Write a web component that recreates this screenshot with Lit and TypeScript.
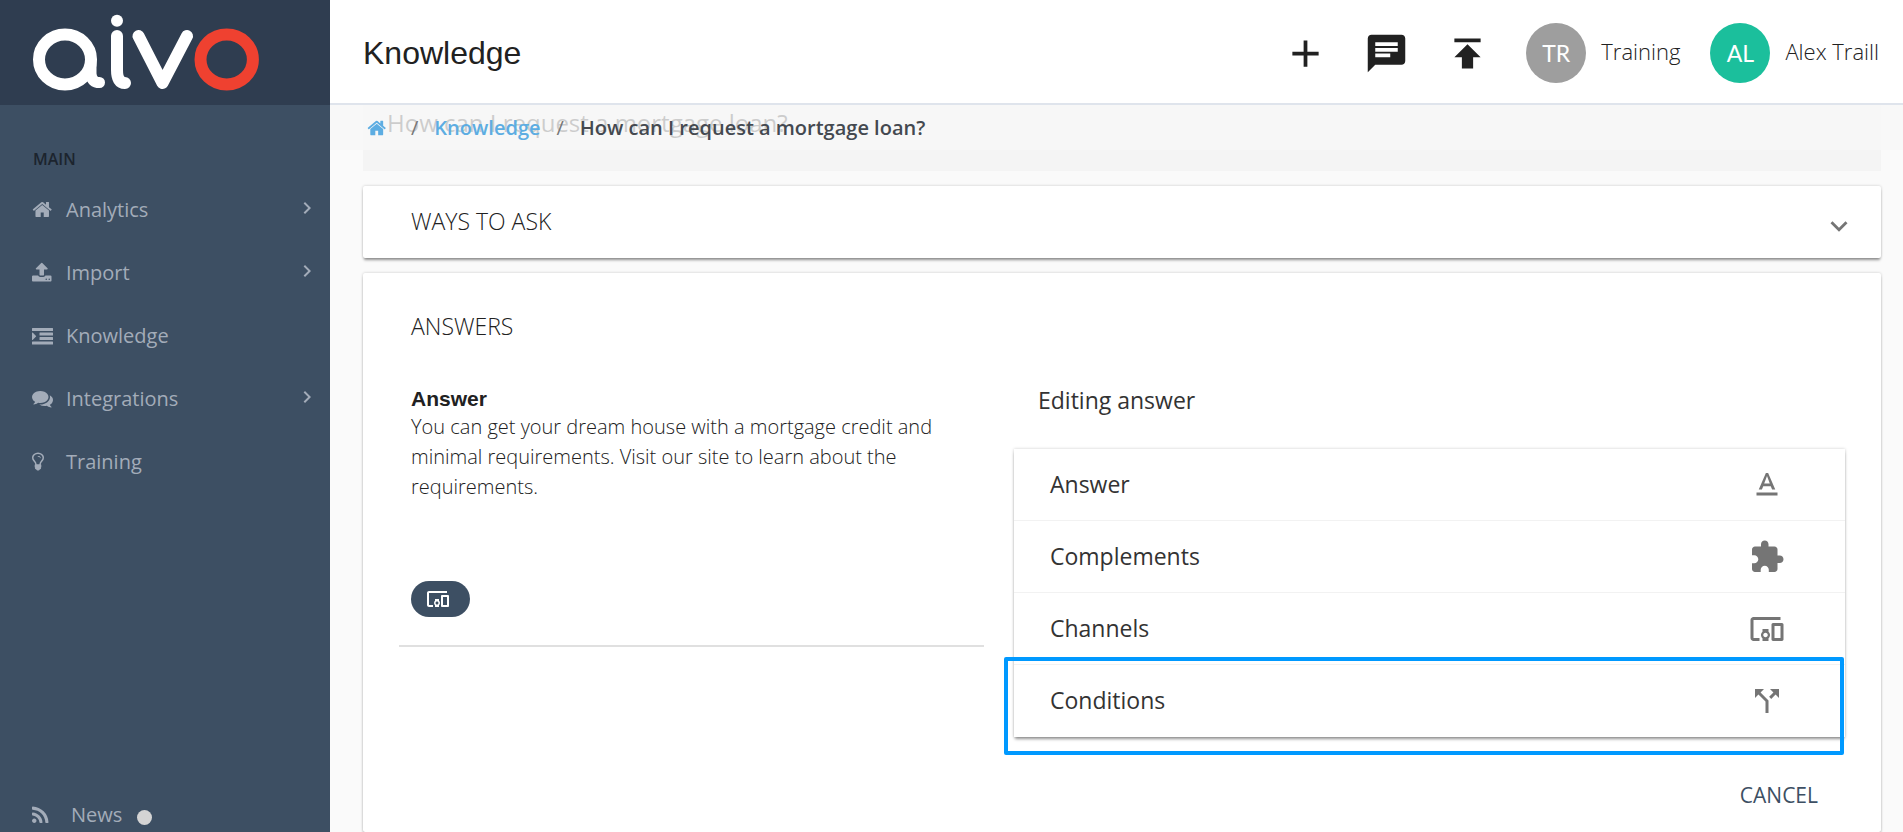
import { LitElement, html, css, svg } from "lit";
import { customElement, property } from "lit/decorators.js";

type Glyph = { box: string; d: string };

/* Sidebar glyphs are drawn on a 1792 unit grid, the rest on a 24 unit grid. */
const GLYPHS: Record<string, Glyph> = {
  home: {
    box: "24 0 1792 1792",
    d: "M1472 992v480q0 26-19 45t-45 19h-384v-384h-256v384h-384q-26 0-45-19t-19-45v-480q0-1 .5-3t.5-3l575-474 575 474q1 2 1 6zm223-69l-62 74q-8 9-21 11h-3q-13 0-21-7l-692-577-692 577q-12 8-24 7-13-2-21-11l-62-74q-8-10-7-23.5t11-21.5l719-599q32-26 76-26t76 26l244 204v-195q0-14 9-23t23-9h192q14 0 23 9t9 23v408l219 182q10 8 11 21.5t-7 23.5z",
  },
  upload: {
    box: "64 0 1792 1792",
    d: "M1344 1472q0-26-19-45t-45-19-45 19-19 45 19 45 45 19 45-19 19-45zm256 0q0-26-19-45t-45-19-45 19-19 45 19 45 45 19 45-19 19-45zm128-224v320q0 40-28 68t-68 28h-1472q-40 0-68-28t-28-68v-320q0-40 28-68t68-28h427q21 56 70.5 92t110.5 36h256q61 0 110.5-36t70.5-92h427q40 0 68 28t28 68zm-325-648q-17 40-59 40h-256v448q0 26-19 45t-45 19h-256q-26 0-45-19t-19-45v-448h-256q-42 0-59-40-17-39 14-69l448-448q18-19 45-19t45 19l448 448q31 30 14 69z",
  },
  indent: {
    box: "0 0 1792 1792",
    d: "M32 256h1728q32 0 32 32v192q0 32-32 32H32q-32 0-32-32V288q0-32 32-32zM672 640h1088q32 0 32 32v192q0 32-32 32H672q-32 0-32-32V672q0-32 32-32zM672 1024h1088q32 0 32 32v192q0 32-32 32H672q-32 0-32-32v-192q0-32 32-32zM32 1408h1728q32 0 32 32v192q0 32-32 32H32q-32 0-32-32v-192q0-32 32-32zM352 960q0 14-9 23l-288 288q-9 9-23 9-32 0-32-32V672q0-32 32-32 14 0 23 9l288 288q9 9 9 23z",
  },
  comments: {
    box: "0 0 1792 1792",
    d: "M1408 768q0 139-94 257t-256.5 186.5-353.5 68.5q-86 0-176-16-124 88-278 128-36 9-86 16h-3q-11 0-20.5-8t-11.5-21q-1-3-1-6.5t.5-6.5 2-6l2.5-5 3.5-5.5 4-5 4.5-5 4-4.5q5-6 23-25t26-29.5 22.5-29 25-38.5 20.5-44q-124-72-195-177t-71-224q0-139 94-257t256.5-186.5 353.5-68.5 353.5 68.5 256.5 186.5 94 257zm384 256q0 120-71 224.5t-195 176.5q10 24 20.5 44t25 38.5 22.5 29 26 29.5 23 25q1 1 4 4.5t4.5 5 4 5 3.5 5.5l2.5 5 2 6 .5 6.5-1 6.5q-3 14-13 22t-22 7q-50-7-86-16-154-40-278-128-90 16-176 16-271 0-472-132 58 4 88 4 161 0 309-45t264-129q125-92 192-212t67-254q0-77-23-152 129 71 204 178t75 230z",
  },
  bulb: {
    box: "384 0 1792 1792",
    d: "M1120 576q0 13-9.5 22.5t-22.5 9.5-22.5-9.5-9.5-22.5q0-46-54-71t-106-25q-13 0-22.5-9.5t-9.5-22.5 9.5-22.5 22.5-9.5q50 0 99.5 16t87 54 37.5 90zm160 0q0-72-34.5-134t-90-101.5-123-62-136.5-22.5-136.5 22.5-123 62-90 101.5-34.5 134q0 101 68 180 10 11 30.5 33t30.5 33q128 153 141 298h228q13-145 141-298 10-11 30.5-33t30.5-33q68-79 68-180zm128 0q0 155-103 268-45 49-74.5 87t-59.5 95.5-34 107.5q47 28 47 82 0 37-25 64 25 27 25 64 0 52-45 81 13 23 13 47 0 46-31.5 71t-77.5 25q-20 44-60 70t-87 26-87-26-60-70q-46 0-77.5-25t-31.5-71q0-24 13-47-45-29-45-81 0-37 25-64-25-27-25-64 0-54 47-82-4-50-34-107.5t-59.5-95.5-74.5-87q-103-113-103-268 0-99 44.5-184.5t117-142 164-89 186.5-32.5 186.5 32.5 164 89 117 142 44.5 184.5z",
  },
  rss: {
    box: "192 0 1792 1792",
    d: "M576 1344q0 80-56 136t-136 56-136-56-56-136 56-136 136-56 136 56 56 136zm512 123q2 28-17 48-18 21-47 21h-135q-25 0-43-16.5t-20-41.5q-22-229-184.5-391.5t-391.5-184.5q-25-2-41.5-20t-16.5-43v-135q0-29 21-47 17-17 43-17h5q160 13 306 80.5t259 181.5q114 113 181.5 259t80.5 306zm512 2q2 27-18 47-18 20-46 20h-143q-26 0-44.5-17.5t-19.5-42.5q-12-215-101-408.5t-231.5-336-336-231.5-408.5-102q-25-1-42.5-19.5t-17.5-43.5v-143q0-28 20-46 18-18 44-18h3q262 13 501.5 120t425.5 294q187 186 294 425.5t120 501.5z",
  },
  right: { box: "0 0 24 24", d: "M8.6 16.6 13.2 12 8.6 7.4 10 6l6 6-6 6z" },
  add: { box: "0 0 24 24", d: "M19 13h-6v6h-2v-6H5v-2h6V5h2v6h6v2z" },
  chat: {
    box: "0 0 24 24",
    d: "M20 2H4c-1.1 0-1.99.9-1.99 2L2 22l4-4h14c1.1 0 2-.9 2-2V4c0-1.1-.9-2-2-2zM6 9h12v2H6V9zm8 5H6v-2h8v2zm4-6H6V6h12v2z",
  },
  publish: { box: "0 0 24 24", d: "M5 4v2h14V4H5zm0 10h4v6h6v-6h4l-7-7-7 7z" },
  down: { box: "0 0 24 24", d: "M16.59 8.59L12 13.17 7.41 8.59 6 10l6 6 6-6z" },
  text: {
    box: "0 0 24 24",
    d: "M5 17v2h14v-2H5zm4.5-4.2h5l.9 2.2h2.1L12.75 4h-1.5L6.5 15h2.1l.9-2.2zM12 5.98L13.87 11h-3.74L12 5.98z",
  },
  puzzle: {
    box: "0 0 24 24",
    d: "M20.5 11H19V7c0-1.1-.9-2-2-2h-4V3.5C13 2.12 11.88 1 10.5 1S8 2.12 8 3.5V5H4c-1.1 0-1.99.9-1.99 2v3.8H3.5c1.49 0 2.7 1.21 2.7 2.7s-1.21 2.7-2.7 2.7H2V20c0 1.1.9 2 2 2h3.8v-1.5c0-1.49 1.21-2.7 2.7-2.7 1.49 0 2.7 1.21 2.7 2.7V22H17c1.1 0 2-.9 2-2v-4h1.5c1.38 0 2.5-1.12 2.5-2.5S21.88 11 20.5 11z",
  },
  devices: {
    box: "0 0 24 24",
    d: "M3 6h18V4H3c-1.1 0-2 .9-2 2v12c0 1.1.9 2 2 2h4v-2H3V6zm10 6H9v1.78c-.61.55-1 1.33-1 2.22s.39 1.67 1 2.22V20h4v-1.78c.61-.55 1-1.34 1-2.22s-.39-1.67-1-2.22V12zm-2 5.5c-.83 0-1.5-.67-1.5-1.5s.67-1.5 1.5-1.5 1.5.67 1.5 1.5-.67 1.5-1.5 1.5zM22 8h-6c-.5 0-1 .5-1 1v10c0 .5.5 1 1 1h6c.5 0 1-.5 1-1V9c0-.5-.5-1-1-1zm-1 10h-4v-8h4v8z",
  },
  split: {
    box: "0 0 24 24",
    d: "M14 4l2.29 2.29-2.88 2.88 1.42 1.42 2.88-2.88L20 10V4zm-4 0H4v6l2.29-2.29 4.71 4.7V20h2v-8.41l-5.29-5.3z",
  },
};

@customElement("ui-icon")
export class UiIcon extends LitElement {
  @property() name = "";

  static styles = css`
    :host {
      display: block;
      flex: none;
      width: 24px;
      height: 24px;
    }
    svg {
      display: block;
      width: 100%;
      height: 100%;
      fill: currentColor;
      overflow: visible;
    }
  `;

  render() {
    const g = GLYPHS[this.name];
    return g
      ? html`<svg viewBox=${g.box} aria-hidden="true">${svg`<path d=${g.d}></path>`}</svg>`
      : null;
  }
}

@customElement("app-sidebar")
export class AppSidebar extends LitElement {
  static styles = css`
    :host {
      display: flex;
      flex-direction: column;
      width: 330px;
      flex: none;
      box-sizing: border-box;
      background: #3d4f63;
      color: #a3acb9;
      font: 20px/30px "Open Sans", sans-serif;
    }
    a {
      color: inherit;
      text-decoration: none;
    }
    .brand {
      display: block;
      height: 105px;
      background: #2f3d50;
    }
    .brand svg {
      display: block;
      width: 330px;
      height: 105px;
    }
    h2 {
      margin: 0;
      padding: 42px 33px 0;
      font-size: 16px;
      line-height: 24px;
      font-weight: 600;
      color: #1c242e;
    }
    ul {
      list-style: none;
      margin: 0;
      padding: 7px 0 0;
    }
    .item {
      display: flex;
      align-items: center;
      height: 63px;
      padding: 0 11px 0 32px;
    }
    .item ui-icon {
      width: 21px;
      height: 21px;
    }
    .label {
      flex: 1;
      padding-left: 13px;
    }
    .item .more {
      width: 24px;
      height: 24px;
      padding-bottom: 4px;
    }
    .news {
      margin-top: auto;
      display: flex;
      align-items: center;
      padding: 0 32px 2px;
    }
    .news ui-icon {
      width: 21px;
      height: 21px;
      margin-right: 18px;
    }
    .dot {
      width: 15px;
      height: 15px;
      margin: 4px 0 0 15px;
      border-radius: 50%;
      background: #d4d4d4;
    }
  `;

  private items = [
    { icon: "home", label: "Analytics", more: true },
    { icon: "upload", label: "Import", more: true },
    { icon: "indent", label: "Knowledge", more: false },
    { icon: "comments", label: "Integrations", more: true },
    { icon: "bulb", label: "Training", more: false },
  ];

  render() {
    return html`
      <a class="brand" href="#" aria-label="aivo">
        <svg viewBox="0 0 330 105" fill="none" stroke-width="12" stroke-linecap="round" stroke-linejoin="round">
          <g stroke="#fff">
            <ellipse cx="65" cy="59.5" rx="26" ry="25"></ellipse>
            <path d="M91 60V74Q92 82.500 99.500 82.500" stroke-width="11"></path>
            <path d="M117 36V70Q117 83 125 83"></path>
            <path d="M138.500 36 162.500 83 187 36"></path>
          </g>
          <circle cx="117" cy="20.700" r="6" fill="#fff"></circle>
          <ellipse cx="226.700" cy="59.500" rx="26.200" ry="25" stroke="#ef4130"></ellipse>
        </svg>
      </a>
      <h2>MAIN</h2>
      <nav>
        <ul>
          ${this.items.map(
            (i) => html`<li>
              <a class="item" href="#">
                <ui-icon name=${i.icon}></ui-icon>
                <span class="label">${i.label}</span>
                ${i.more ? html`<ui-icon class="more" name="right"></ui-icon>` : null}
              </a>
            </li>`
          )}
        </ul>
      </nav>
      <a class="news" href="#">
        <ui-icon name="rss"></ui-icon>
        <span>News</span>
        <span class="dot"></span>
      </a>
    `;
  }
}

@customElement("app-header")
export class AppHeader extends LitElement {
  static styles = css`
    :host {
      display: flex;
      align-items: center;
      justify-content: space-between;
      box-sizing: border-box;
      height: 105px;
      padding: 3px 24px 0 33px;
      background: #fff;
      border-bottom: 2px solid #dfe4ec;
      color: #212121;
    }
    h1 {
      margin: 0;
      font: 400 32px/40px "Liberation Sans", Arial, sans-serif;
    }
    .actions,
    .account {
      display: flex;
      align-items: center;
    }
    button {
      display: block;
      margin: 0 36px 0 0;
      padding: 0;
      border: 0;
      background: none;
      color: inherit;
    }
    button ui-icon {
      width: 45px;
      height: 45px;
    }
    .account {
      gap: 15px;
      color: inherit;
      text-decoration: none;
      font: 300 22px/28px "Open Sans", sans-serif;
    }
    .account + .account {
      margin-left: 30px;
    }
    .avatar {
      width: 60px;
      height: 60px;
      border-radius: 50%;
      background: #9e9e9e;
      color: #fff;
      text-align: center;
      font: 400 23px/60px Lato, sans-serif;
    }
    .avatar.user {
      background: #1bbf9c;
    }
    .name {
      padding-bottom: 4px;
    }
  `;

  render() {
    return html`
      <h1>Knowledge</h1>
      <div class="actions">
        <button aria-label="Add"><ui-icon name="add"></ui-icon></button>
        <button aria-label="Messages"><ui-icon name="chat"></ui-icon></button>
        <button aria-label="Publish"><ui-icon name="publish"></ui-icon></button>
        <a class="account" href="#"><span class="avatar">TR</span><span class="name">Training</span></a>
        <a class="account" href="#"><span class="avatar user">AL</span><span class="name">Alex Traill</span></a>
      </div>
    `;
  }
}

@customElement("answer-editor")
export class AnswerEditor extends LitElement {
  static styles = css`
    :host {
      display: block;
      font: 400 23px/30px "Open Sans", sans-serif;
      color: #333;
    }
    h3 {
      margin: 0 0 31px;
      padding: 1px 24px 0;
      font-size: 23px;
      line-height: 36px;
      font-weight: 400;
    }
    .list {
      position: relative;
      background: #fff;
      box-shadow: 0 3px 3px -1px rgba(0, 0, 0, 0.4), 0 0 3px rgba(0, 0, 0, 0.2);
    }
    .row {
      display: flex;
      align-items: center;
      justify-content: space-between;
      box-sizing: border-box;
      width: 100%;
      height: 72px;
      padding: 0 60px 0 36px;
      border: 0;
      border-bottom: 1px solid #f2f2f2;
      background: none;
      color: inherit;
      font: inherit;
      text-align: left;
    }
    .row:last-of-type {
      border-bottom: 0;
    }
    .row span {
      padding-bottom: 2px;
    }
    .row ui-icon {
      width: 36px;
      height: 36px;
      color: #757575;
    }
    .focus {
      position: absolute;
      inset: 208px 1px -18px -10px;
      border: 4px solid #0099ff;
      border-radius: 2px;
      pointer-events: none;
    }
    .foot {
      display: flex;
      justify-content: flex-end;
      padding: 43px 27px 0 0;
    }
    .cancel {
      padding: 0;
      border: 0;
      background: none;
      color: #3d4f63;
      font: 400 21px/30px "Open Sans", sans-serif;
    }
  `;

  private rows = [
    { label: "Answer", icon: "text" },
    { label: "Complements", icon: "puzzle" },
    { label: "Channels", icon: "devices" },
    { label: "Conditions", icon: "split" },
  ];

  render() {
    return html`
      <h3>Editing answer</h3>
      <div class="list">
        ${this.rows.map(
          (r) => html`<button class="row"><span>${r.label}</span><ui-icon name=${r.icon}></ui-icon></button>`
        )}
        <div class="focus"></div>
      </div>
      <div class="foot"><button class="cancel">CANCEL</button></div>
    `;
  }
}

@customElement("app-root")
export class AppRoot extends LitElement {
  static styles = css`
    :host {
      display: flex;
      min-height: 100vh;
      background: #fafafa;
      color: #212121;
      font: 300 23px/36px "Open Sans", sans-serif;
    }
    .page {
      display: flex;
      flex-direction: column;
      flex: 1;
      min-width: 0;
    }
    main {
      position: relative;
      display: flex;
      flex-direction: column;
      flex: 1;
      gap: 15px;
      padding: 0 22px 0 33px;
    }
    .title {
      margin: 0;
      padding: 0 24px 30px;
      background: #f4f4f4;
      font-size: 24px;
      line-height: 36px;
      font-weight: 400;
    }
    .crumbs {
      position: absolute;
      inset: 0 0 auto 0;
      display: flex;
      align-items: center;
      box-sizing: border-box;
      height: 45px;
      padding: 0 37px;
      background: rgba(248, 248, 248, 0.8);
      font-size: 20px;
      line-height: 30px;
      font-weight: 600;
      color: #444950;
    }
    .crumbs a {
      color: #5dade2;
      text-decoration: none;
    }
    .crumbs ui-icon {
      width: 20px;
      height: 20px;
      padding-right: 8px;
    }
    .sep {
      padding: 0 16px;
      font-weight: 400;
      color: #777;
    }
    .card {
      background: #fff;
      border-radius: 2px;
      box-shadow: 0 3px 3px -1px rgba(0, 0, 0, 0.4), 0 0 3px rgba(0, 0, 0, 0.2);
    }
    .ways {
      display: flex;
      align-items: center;
      justify-content: space-between;
      height: 72px;
      padding: 0 25px 0 48px;
      border: 0;
      color: inherit;
      font: inherit;
      text-align: left;
    }
    .ways span {
      padding-bottom: 2px;
    }
    .ways ui-icon {
      width: 34px;
      height: 34px;
      padding-top: 8px;
      color: #757575;
    }
    .answers {
      flex: 1;
      padding: 35px 36px 0;
    }
    h2 {
      margin: 0 0 37px;
      padding: 0 12px;
      font-size: 23px;
      line-height: 36px;
      font-weight: 300;
    }
    .columns {
      display: grid;
      grid-template-columns: 585fr 831fr;
      gap: 30px;
      align-items: start;
    }
    .answer {
      padding: 4px 12px 28px;
      border-bottom: 2px solid #e0e0e0;
      font-size: 20px;
      line-height: 30px;
    }
    h3 {
      margin: 0;
      font: 700 21px/27px "Liberation Sans", Arial, sans-serif;
    }
    p {
      margin: 0;
    }
    .chip {
      display: flex;
      align-items: center;
      justify-content: center;
      box-sizing: border-box;
      width: 59px;
      height: 36px;
      margin-top: 79px;
      padding: 0 5px 0 0;
      border: 0;
      border-radius: 18px;
      background: #3d4f63;
      color: #fff;
    }
  `;

  render() {
    return html`
      <app-sidebar></app-sidebar>
      <div class="page">
        <app-header></app-header>
        <main>
          <h2 class="title">How can I request a mortgage loan?</h2>
          <nav class="crumbs" aria-label="Breadcrumb">
            <a href="#" aria-label="Home"><ui-icon name="home"></ui-icon></a>
            <span class="sep">/</span>
            <a href="#">Knowledge</a>
            <span class="sep">/</span>
            <span>How can I request a mortgage loan?</span>
          </nav>
          <button class="card ways">
            <span>WAYS TO ASK</span>
            <ui-icon name="down"></ui-icon>
          </button>
          <section class="card answers">
            <h2>ANSWERS</h2>
            <div class="columns">
              <div class="answer">
                <h3>Answer</h3>
                <p>
                  You can get your dream house with a mortgage credit and minimal requirements. Visit our site to learn
                  about the requirements.
                </p>
                <button class="chip" aria-label="Channels"><ui-icon name="devices"></ui-icon></button>
              </div>
              <answer-editor></answer-editor>
            </div>
          </section>
        </main>
      </div>
    `;
  }
}
